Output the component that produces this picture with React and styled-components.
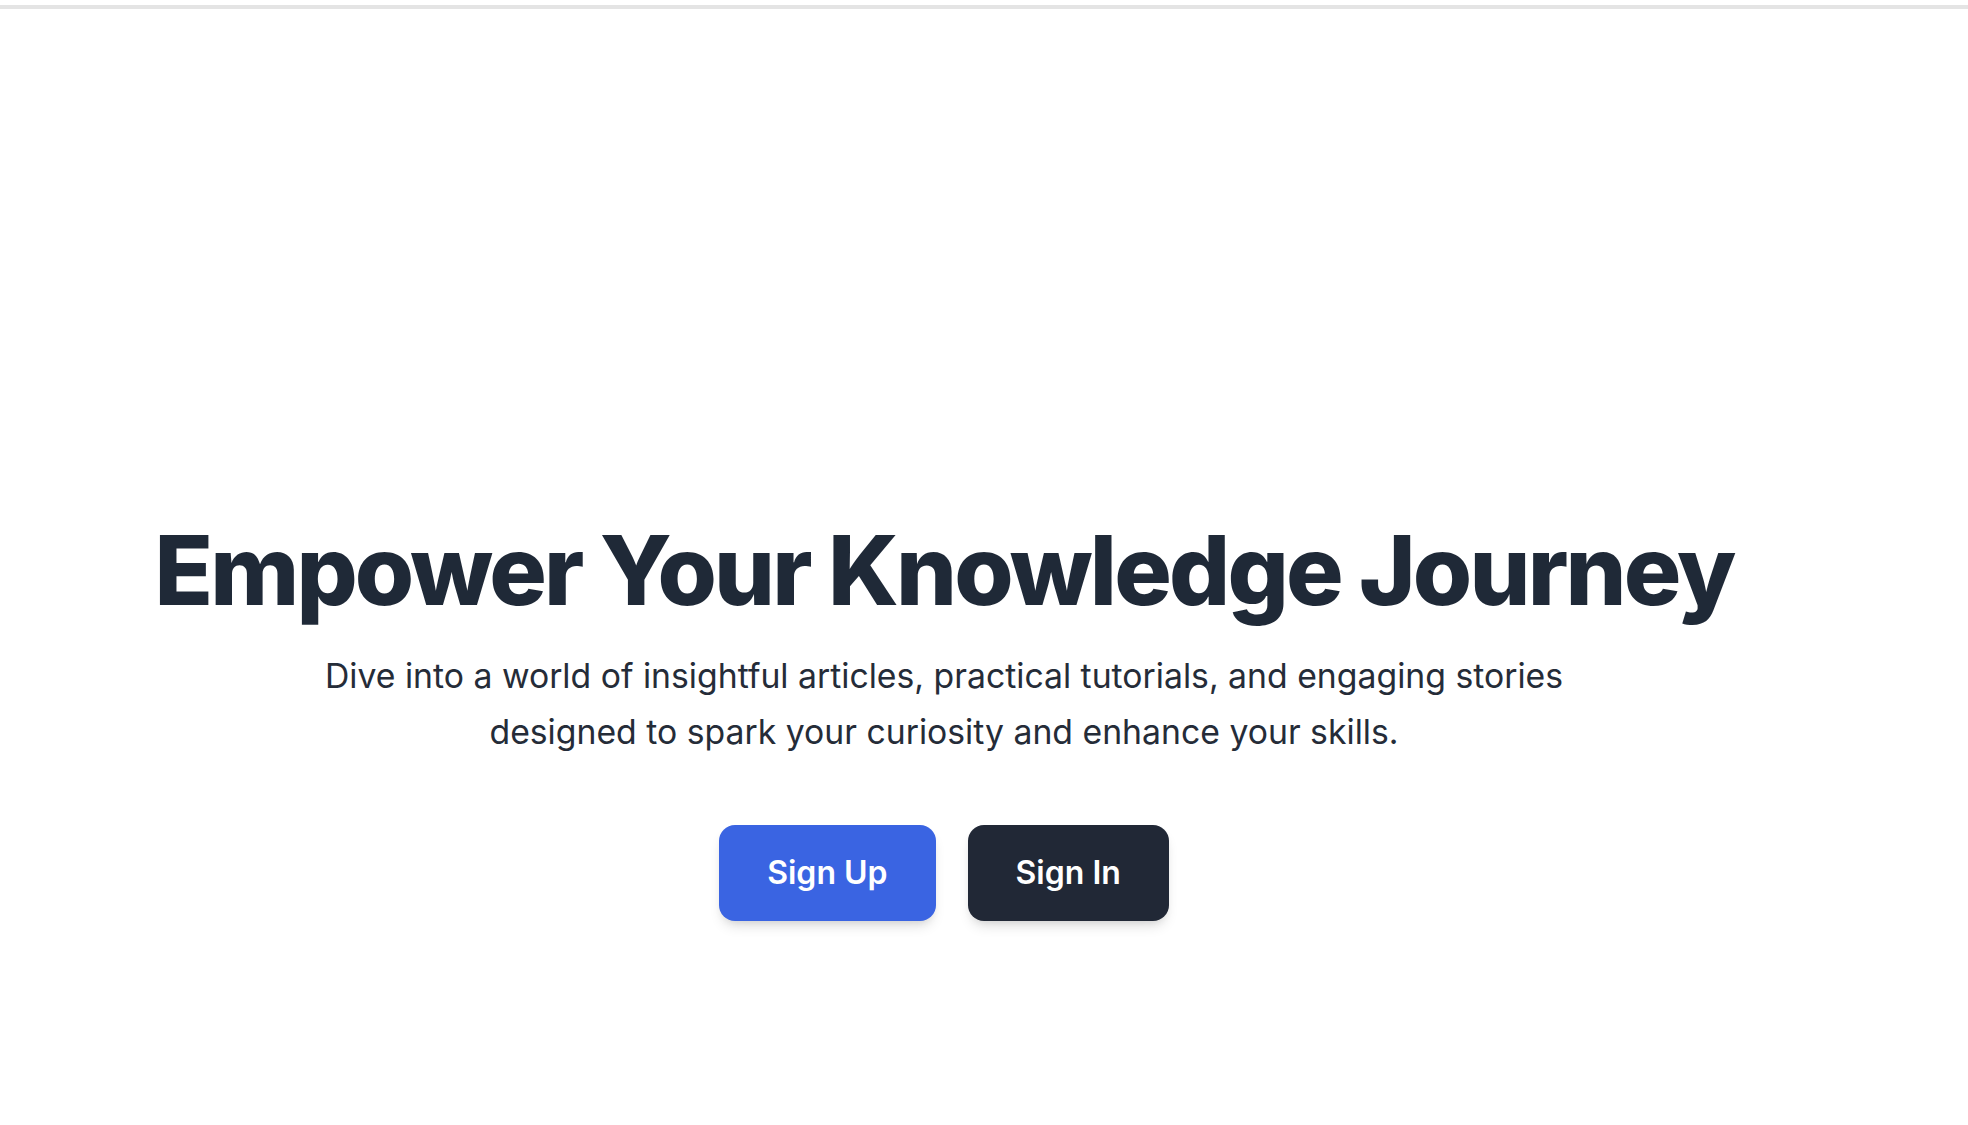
import React from "react";
import styled, { createGlobalStyle } from "styled-components";

const GlobalStyle = createGlobalStyle`
  html, body {
    margin: 0;
    padding: 0;
    background: #ffffff;
    font-family: Inter, "Noto Sans", "Liberation Sans", sans-serif;
    -webkit-font-smoothing: antialiased;
  }
  * { box-sizing: border-box; }
`;

const Page = styled.div`
  min-height: 1125px;
  display: flex;
  flex-direction: column;
`;

const TopRule = styled.div`
  height: 4px;
  margin-top: 5px;
  background: #e4e4e4;
`;

const Hero = styled.section`
  display: flex;
  flex-direction: column;
  align-items: center;
  padding: 513px 80px 0 0;
`;

const Title = styled.h1`
  margin: 0;
  font-size: 96px;
  line-height: 96px;
  font-weight: 800;
  letter-spacing: -2.8px;
  color: #1f2937;
  text-align: center;
  white-space: nowrap;
`;

const Lead = styled.p`
  margin: 30px 0 0;
  max-width: 1344px;
  font-size: 33.75px;
  line-height: 56px;
  font-weight: 400;
  color: #252c38;
  text-align: center;
`;

const Actions = styled.div`
  display: flex;
  gap: 32px;
  margin-top: 65px;
`;

const Button = styled.button`
  border: none;
  cursor: pointer;
  font-family: inherit;
  font-size: 32px;
  line-height: 48px;
  font-weight: 600;
  color: #ffffff;
  padding: 24px 48px;
  border-radius: 16px;
  background: ${(p) => (p.$variant === "primary" ? "#3a64e2" : "#212836")};
  box-shadow: 0 8px 14px -4px rgba(0, 0, 0, 0.14), 0 4px 8px -4px rgba(0, 0, 0, 0.1);
`;

export default function App() {
  return (
    <>
      <GlobalStyle />
      <Page>
        <TopRule />
        <Hero>
          <Title>Empower Your Knowledge Journey</Title>
          <Lead>
            Dive into a world of insightful articles, practical tutorials, and engaging stories
            designed to spark your curiosity and enhance your skills.
          </Lead>
          <Actions>
            <Button $variant="primary">Sign Up</Button>
            <Button $variant="dark">Sign In</Button>
          </Actions>
        </Hero>
      </Page>
    </>
  );
}
